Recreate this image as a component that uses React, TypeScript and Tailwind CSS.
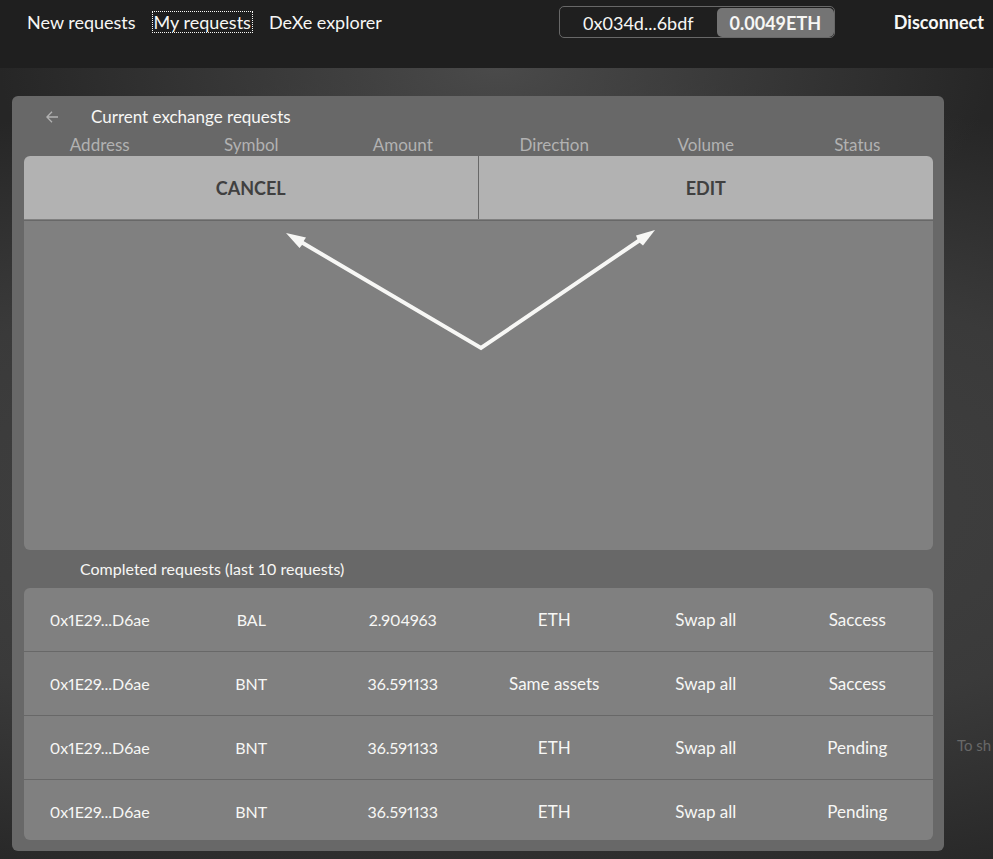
type Completed = {
  address: string;
  symbol: string;
  amount: string;
  direction: string;
  volume: string;
  status: string;
};

const columns = ["Address", "Symbol", "Amount", "Direction", "Volume", "Status"];

const completed: Completed[] = [
  { address: "0x1E29...D6ae", symbol: "BAL", amount: "2.904963", direction: "ETH", volume: "Swap all", status: "Saccess" },
  { address: "0x1E29...D6ae", symbol: "BNT", amount: "36.591133", direction: "Same assets", volume: "Swap all", status: "Saccess" },
  { address: "0x1E29...D6ae", symbol: "BNT", amount: "36.591133", direction: "ETH", volume: "Swap all", status: "Pending" },
  { address: "0x1E29...D6ae", symbol: "BNT", amount: "36.591133", direction: "ETH", volume: "Swap all", status: "Pending" },
];

function Header() {
  return (
    <header className="flex h-[68px] items-start bg-[#1f1f1f] pt-1.5 pr-[9px] pl-[27px] text-[18px] leading-5 text-[#f7f7f5]">
      <nav className="flex h-8 items-center gap-[17px] whitespace-nowrap">
        <a href="#new">New requests</a>
        <a href="#my" className="px-px outline-1 outline-dotted outline-[#f7f7f5]">My requests</a>
        <a href="#explorer">DeXe explorer</a>
      </nav>
      <div className="ml-auto flex h-8 items-center">
        <div className="flex h-8 w-[276px] items-stretch rounded-[5px] border border-[#686868] pt-px">
          <span className="flex flex-1 items-center justify-center">0x034d...6bdf</span>
          <span className="flex w-[117px] items-center justify-center rounded-[5px] bg-[#747474] font-bold">0.0049ETH</span>
        </div>
        <button type="button" className="ml-[59px] font-bold">Disconnect</button>
      </div>
    </header>
  );
}

function Arrows() {
  return (
    <svg
      className="pointer-events-none absolute top-[9px] left-[262px] h-[124px] w-[370px]"
      viewBox="286 228 370 124"
      aria-hidden="true"
    >
      <path d="M302 242.500 481 348 640 240" fill="none" stroke="#f7f7f5" strokeWidth="4" />
      <path d="M286 233 306 237.500 304 240.500 302 245 299.500 248Z" fill="#f7f7f5" />
      <path d="M655 230 636 235.500 638 240.500 640 243 643 245.500Z" fill="#f7f7f5" />
    </svg>
  );
}

function CurrentRequests() {
  return (
    <section>
      <div className="flex h-[26px] items-center">
        <button type="button" aria-label="Back" className="ml-[22px] text-[#b2b2b2]">
          <svg className="h-3 w-3" viewBox="0 0 12 12" fill="none" stroke="currentColor" strokeWidth="1.3" aria-hidden="true">
            <path d="M12 6H1M6 0.700 0.900 6 6 11.300" />
          </svg>
        </button>
        <h2 className="ml-[33px]">Current exchange requests</h2>
      </div>
      <table className="w-full table-fixed border-collapse">
        <thead>
          <tr className="h-[26px]">
            {columns.map((name) => (
              <th key={name} scope="col" className="p-0 pt-1 text-center leading-5 font-normal text-[#b2b2b2]">
                {name}
              </th>
            ))}
          </tr>
        </thead>
        <tbody>
          <tr className="text-[18px] text-[#404040]">
            <td colSpan={3} className="p-0">
              <button type="button" className="block h-[63px] w-full rounded-tl-md border-r border-[#686868] bg-[#b2b2b2] pt-px font-bold">
                CANCEL
              </button>
            </td>
            <td colSpan={3} className="p-0">
              <button type="button" className="block h-[63px] w-full rounded-tr-md bg-[#b2b2b2] pt-px font-bold">
                EDIT
              </button>
            </td>
          </tr>
        </tbody>
      </table>
      <div className="relative rounded-b-md bg-[#808080] pt-px">
        <div className="h-[330px] border-t border-[#686868]" />
        <Arrows />
      </div>
    </section>
  );
}

function CompletedRequests() {
  return (
    <section>
      <h2 className="flex h-[38px] items-center pl-14 text-[16px]">Completed requests (last 10 requests)</h2>
      <div className="h-[252px] overflow-hidden rounded-md bg-[#808080]">
        <table className="w-full table-fixed border-separate border-spacing-0 text-center [&_td]:h-16 [&_td]:border-b [&_td]:border-[#686868] [&_td]:p-0">
          <tbody>
            {completed.map((row, index) => (
              <tr key={index}>
                <td className="text-[16px] proportional-nums">{row.address}</td>
                <td className="text-[16px]">{row.symbol}</td>
                <td className="text-[16px] proportional-nums">{row.amount}</td>
                <td>{row.direction}</td>
                <td>{row.volume}</td>
                <td>{row.status}</td>
              </tr>
            ))}
          </tbody>
        </table>
      </div>
    </section>
  );
}

export default function App() {
  return (
    <div className="flex min-h-screen flex-col overflow-hidden bg-[#262626] font-['Lato','Open_Sans',sans-serif]">
      <Header />
      <div className="flex flex-1 items-start bg-[radial-gradient(ellipse_50%_30%_at_50%_0%,#4a4a4a_0%,#40404000_100%),radial-gradient(ellipse_110%_54%_at_50%_55%,#444444_0%,#3a3a3a_60%,#262626_100%)] pt-7 pl-3">
        <main className="mb-2 min-w-0 flex-1 rounded-md bg-[#686868] pt-2 pr-[11px] pb-[11px] pl-3 text-[17px] text-[#f7f7f5]">
          <CurrentRequests />
          <CompletedRequests />
        </main>
        <aside className="ml-[13px] w-9 self-stretch pt-[637px] text-[15px] leading-6 whitespace-nowrap text-[#686868]">
          To sh
        </aside>
      </div>
    </div>
  );
}
